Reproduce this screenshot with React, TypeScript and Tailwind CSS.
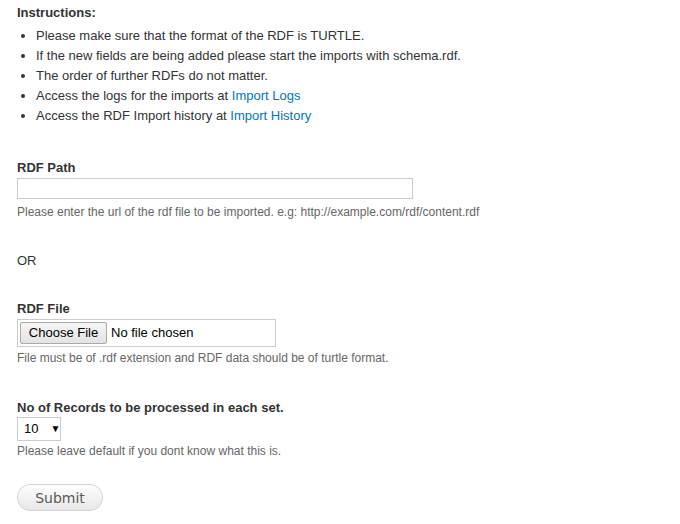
export default function App() {
  return (
    <div className="min-h-[524px] bg-white px-[17px] pt-[3px] font-['Liberation_Sans',Arial,sans-serif] text-[13px] leading-[20px] text-[#333]">
      <div className="font-bold">Instructions:</div>
      <ul className="mt-[3px] list-disc pl-[19px] marker:text-[#333]">
        <li>Please make sure that the format of the RDF is TURTLE.</li>
        <li>If the new fields are being added please start the imports with schema.rdf.</li>
        <li>The order of further RDFs do not matter.</li>
        <li>
          Access the logs for the imports at <a href="#" className="text-[#0074bd]">Import Logs</a>
        </li>
        <li>
          Access the RDF Import history at <a href="#" className="text-[#0074bd]">Import History</a>
        </li>
      </ul>

      <form className="mt-[32px]" onSubmit={(e) => e.preventDefault()}>
        <div>
          <label className="block font-bold">RDF Path</label>
          <input
            type="text"
            className="block h-[21px] w-[396px] border border-[#ccc] px-1 outline-none"
          />
          <div className="mt-[5px] text-[12px] leading-[16px] text-[#666]">
            Please enter the url of the rdf file to be imported. e.g: http://example.com/rdf/content.rdf
          </div>
        </div>

        <div className="mt-[31px]">OR</div>

        <div className="mt-[28px]">
          <label className="block font-bold">RDF File</label>
          <div className="flex h-[28px] w-[259px] items-center border border-[#ccc] pl-[2px]">
            <button
              type="button"
              className="h-[22px] w-[87px] rounded-[2px] border border-[#a9a9a9] bg-gradient-to-b from-[#f5f5f5] to-[#e3e3e3] text-[13px] leading-[20px] text-black"
            >
              Choose File
            </button>
            <span className="ml-[4px] text-[13px] text-black">No file chosen</span>
          </div>
          <div className="mt-[3px] text-[12px] leading-[16px] text-[#666]">
            File must be of .rdf extension and RDF data should be of turtle format.
          </div>
        </div>

        <div className="mt-[32px]">
          <label className="block font-bold">No of Records to be processed in each set.</label>
          <div className="-mt-[1px] flex h-[24px] w-[44px] items-center border border-[#ccc] pl-[6px] text-black">
            <span className="text-[13px]">10</span>
            <span className="ml-[12px] text-[10px]">▼</span>
          </div>
          <div className="mt-[2px] text-[12px] leading-[16px] text-[#666]">
            Please leave default if you dont know what this is.
          </div>
        </div>

        <button
          type="submit"
          className="mt-[25px] h-[27px] w-[86px] rounded-[13px] border border-[#d4d4d4] bg-gradient-to-b from-[#fdfdfd] to-[#e8e8e8] font-['DejaVu_Sans',sans-serif] text-[14px] text-[#5a5a5a]"
        >
          Submit
        </button>
      </form>
    </div>
  );
}
